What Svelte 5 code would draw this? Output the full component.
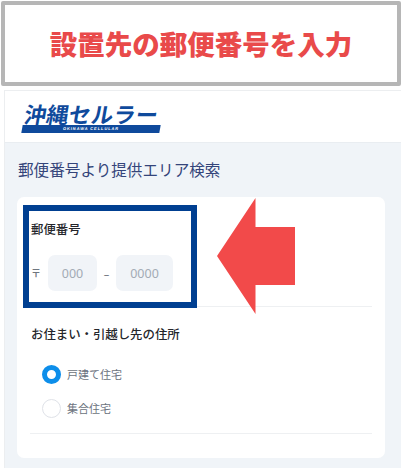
<script>
  const homes = [
    { label: '戸建て住宅', checked: true },
    { label: '集合住宅', checked: false }
  ];
</script>

<div class="page">
  <div class="banner"><span>設置先の郵便番号を入力</span></div>

  <div class="panel">
    <header class="head">
      <div class="logo">
        <div class="logo-word">沖縄セルラー</div>
        <div class="logo-bar"><span>OKINAWA CELLULAR</span></div>
      </div>
    </header>

    <main class="body">
      <h1>郵便番号より提供エリア検索</h1>
      <section class="card">
        <div class="postal">
          <h2>郵便番号</h2>
          <div class="zip">
            <span class="mark">〒</span>
            <span class="input a">000</span>
            <span class="dash">–</span>
            <span class="input b">0000</span>
          </div>
        </div>
        <div class="address">
          <h2>お住まい・引越し先の住所</h2>
          <div class="radios">
            {#each homes as h}
              <div class="radio">
                <span class="dot" class:on={h.checked}></span>
                <span>{h.label}</span>
              </div>
            {/each}
          </div>
        </div>
        <div class="blue-box"></div>
        <svg class="arrow" width="80" height="116" viewBox="0 0 80 116">
          <polygon points="0,58 38.500,0 38.500,29 78,29 78,87 38.500,87 38.500,116" fill="#f24a4a" />
        </svg>
      </section>
    </main>
  </div>
</div>

<style>
  :global(body) {
    margin: 0;
    background: #fff;
  }
  .page {
    width: 401px;
    height: 468px;
    overflow: hidden;
    font-family: "Noto Sans CJK JP", "Noto Sans", sans-serif;
    box-sizing: border-box;
    padding: 1px 0 0 1px;
  }
  .banner {
    box-sizing: border-box;
    width: 400px;
    height: 85px;
    border: 4px solid #b6b6b6;
    border-radius: 2px;
    display: flex;
    align-items: center;
    justify-content: center;
    color: #e94a4a;
    font-weight: 900;
    font-size: 27.500px;
    line-height: 1;
  }
  .panel {
    box-sizing: border-box;
    margin: 4px 0 0 3px;
    width: 397px;
    height: 378px;
    border: 1px solid #eceef0;
    border-bottom: 0;
    border-right: 0;
    background: #f0f4f8;
  }
  .head {
    height: 52px;
    background: #fff;
    border-bottom: 1px solid #e9edf1;
    box-sizing: border-box;
    padding: 12px 0 0 17px;
  }
  .logo {
    width: 138px;
  }
  .logo-word {
    color: #0f4a9c;
    font-weight: 700;
    font-size: 22px;
    line-height: 20px;
    letter-spacing: 0.300px;
    white-space: nowrap;
    transform: skewX(-10deg);
    transform-origin: left bottom;
    padding-left: 1px;
  }
  .logo-bar {
    height: 8px;
    margin-top: 2px;
    background: #0f4a9c;
    transform: skewX(-10deg);
    display: flex;
    align-items: center;
    justify-content: center;
  }
  .logo-bar span {
    color: #fff;
    font-family: "Liberation Sans", sans-serif;
    font-weight: 700;
    font-size: 4px;
    letter-spacing: 0.900px;
    line-height: 1;
    white-space: nowrap;
  }
  .body {
    padding: 15px 15px 0 12px;
  }
  h1 {
    margin: 0 0 16px 1px;
    font-size: 15.600px;
    line-height: 23px;
    font-weight: 400;
    color: #34447a;
  }
  .card {
    position: relative;
    box-sizing: border-box;
    width: 368px;
    height: 261px;
    background: #fff;
    border-radius: 7px;
    padding: 0 13px;
  }
  h2 {
    margin: 0 0 0 1px;
    font-size: 12.400px;
    line-height: 18px;
    font-weight: 500;
    color: #24262b;
    white-space: nowrap;
  }
  .postal {
    height: 110px;
    box-sizing: border-box;
    padding-top: 23px;
    border-bottom: 1px solid #eef0f2;
  }
  .zip {
    display: flex;
    align-items: center;
    margin-top: 17px;
    padding-left: 1px;
    color: #6f7680;
  }
  .mark {
    width: 17px;
    font-size: 10px;
    line-height: 36px;
    font-weight: 700;
  }
  .input {
    box-sizing: border-box;
    height: 36px;
    border-radius: 7px;
    background: #f1f4f8;
    display: flex;
    align-items: center;
    justify-content: center;
    color: #a3abb5;
    font-family: "Noto Sans", sans-serif;
    font-size: 12.500px;
  }
  .a {
    width: 49px;
  }
  .b {
    width: 57px;
  }
  .dash {
    width: 19px;
    text-align: center;
    font-size: 11px;
    font-family: "Noto Sans", sans-serif;
  }
  .address {
    height: 127px;
    box-sizing: border-box;
    padding-top: 18px;
    border-bottom: 1px solid #eef0f2;
  }
  .radios {
    margin-top: 22px;
    padding-left: 12px;
    display: flex;
    flex-direction: column;
    gap: 15px;
  }
  .radio {
    display: flex;
    align-items: center;
    gap: 6px;
    font-size: 11px;
    line-height: 19px;
    color: #6c7380;
  }
  .dot {
    box-sizing: border-box;
    width: 19px;
    height: 19px;
    border-radius: 50%;
    border: 1px solid #dfe2e8;
    background: #fff;
  }
  .dot.on {
    border: 5px solid #0d8eea;
  }
  .blue-box {
    position: absolute;
    left: 6px;
    top: 8px;
    width: 174px;
    height: 103px;
    box-sizing: border-box;
    border: 6px solid #003f91;
  }
  .arrow {
    position: absolute;
    left: 200px;
    top: 1px;
  }
</style>
